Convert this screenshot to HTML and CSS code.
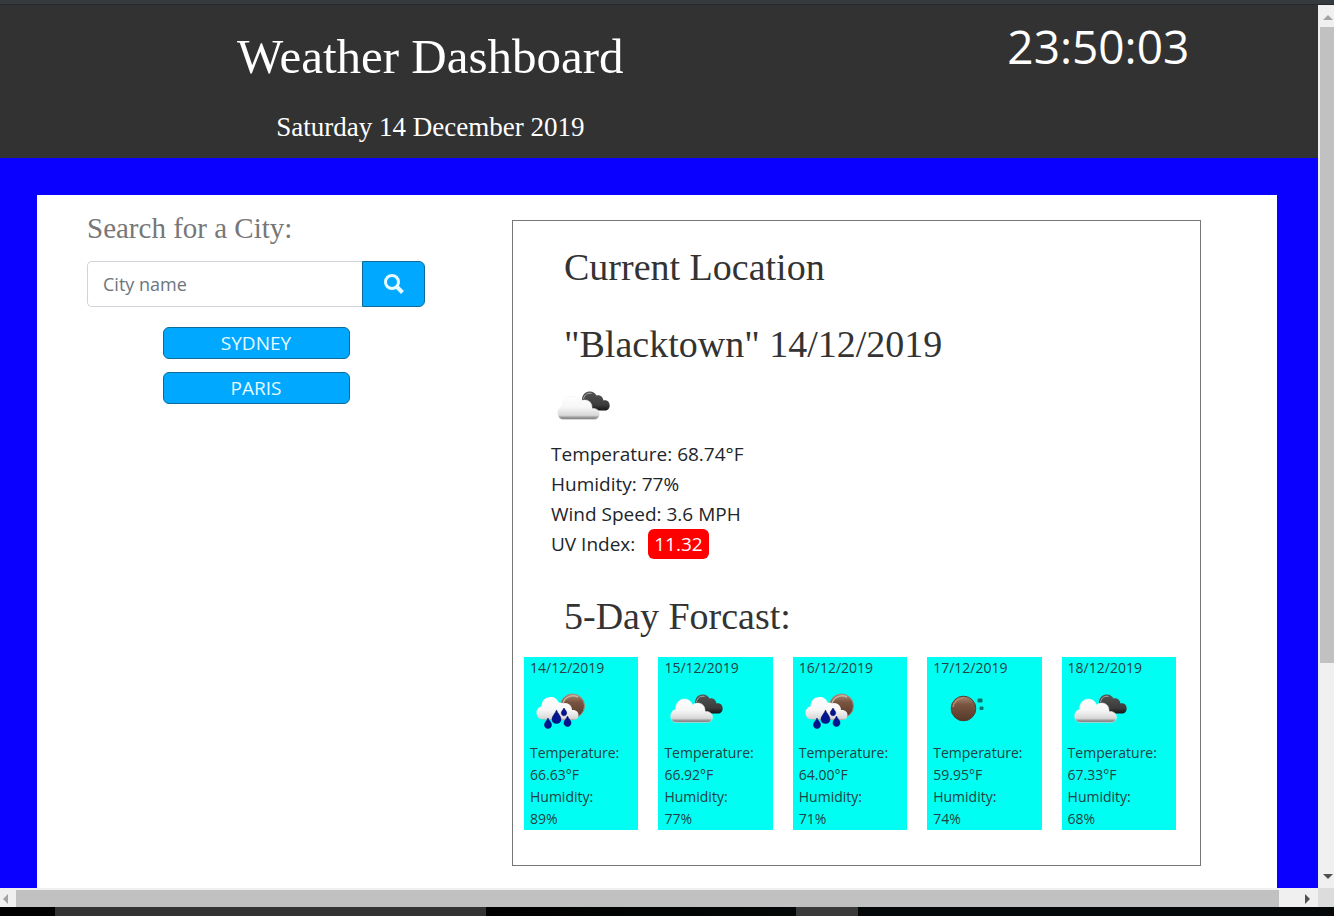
FILE: index.html
```html
<!DOCTYPE html>
<html lang="en">
<head>
<meta charset="utf-8">
<title>Weather Dashboard</title>
<link rel="stylesheet" href="styles.css">
</head>
<body>
<svg class="defs" aria-hidden="true">
  <defs>
    <linearGradient id="white-cloud" gradientUnits="userSpaceOnUse" x1="0" y1="18" x2="0" y2="44">
      <stop offset="0" stop-color="#fff"/><stop offset=".5" stop-color="#f7f7f7"/><stop offset=".82" stop-color="#d8d8d8"/><stop offset=".9" stop-color="#999"/><stop offset="1" stop-color="#777"/>
    </linearGradient>
    <linearGradient id="dark-cloud" gradientUnits="userSpaceOnUse" x1="0" y1="15" x2="0" y2="35">
      <stop offset="0" stop-color="#555"/><stop offset=".7" stop-color="#3c3c3c"/><stop offset="1" stop-color="#111"/>
    </linearGradient>
    <linearGradient id="sun" x1="0" y1="0" x2="0" y2="1">
      <stop offset="0" stop-color="#a98a74"/><stop offset=".35" stop-color="#795440"/><stop offset="1" stop-color="#55392a"/>
    </linearGradient>
    <symbol id="cloudy" viewBox="0 0 62 63">
      <path fill="url(#dark-cloud)" d="M31 24C31 18 35 15.500 39 15.500C42 15.500 44.500 17.500 45.500 19.500C49 18.500 52 21 52.500 24.500C56 23.500 58.700 26 58.700 29.500C58.700 32.500 56.500 34.500 54 34.500H40Z"/>
      <path fill="none" stroke="#aaa" d="M32.500 23C33.500 18.500 37 16.500 40.500 17.500"/>
      <path fill="url(#white-cloud)" stroke="#eee" stroke-width=".5" d="M12 43.500C8.500 43.500 6.700 40.500 6.700 37C6.700 33.500 8.500 31 11.500 30.500C11.500 24.500 15 20 20.500 20C24.500 20 27.500 22.500 28.500 26C30 24.500 32 24 34 24C38.500 24 41.500 28 41 32.500C45.500 32 48.500 34.500 48.500 38C48.500 41.500 46 43.500 43 43.500Z"/>
    </symbol>
    <symbol id="rain" viewBox="0 0 62 63">
      <circle cx="42.500" cy="27" r="12" fill="url(#sun)" stroke="#a48e7c"/>
      <path fill="none" stroke="#c9b5a6" stroke-width="1.500" d="M33 24C35 18 42 15 48 18"/>
      <path fill="url(#white-cloud)" d="M13 40.500C9 40.500 6.500 37.500 6.500 34C6.500 30.500 8.500 28 11.500 27.500C11.500 22 15 18 20.500 18C24.500 18 27.500 20 28.500 23.500C33 23 36.500 26.500 36.500 32L29 41Z"/>
      <path fill="url(#white-cloud)" d="M25 41C21 41 19 37 21 34C22 32 24 31 27 31C27.500 27 31 24 35 24C39 24 42 27 42 31C46 30.500 48.500 33 48.500 36C48.500 39 46.500 41 43 41Z"/>
      <g fill="#00158f" stroke="#000060" stroke-width=".5">
        <path d="M26.500 31C28 35 31 37 31 40.500C31 43 29 44.500 26.500 44.500S22 43 22 40.500C22 37 25 35 26.500 31Z"/>
        <path d="M18 39C19 42 21.500 43 21.500 46C21.500 48 20 49.500 18 49.500S14.500 48 14.500 46C14.500 43 17 42 18 39Z"/>
        <path d="M37.500 37C38.500 40 41 41 41 44C41 46 39.500 47.500 37.500 47.500S34 46 34 44C34 41 36.500 40 37.500 37Z"/>
        <path d="M34 29C35 31 36.700 32 36.700 34C36.700 35.500 35.500 36.700 34 36.700S31.300 35.500 31.300 34C31.300 32 33 31 34 29Z"/>
      </g>
    </symbol>
    <symbol id="clear" viewBox="0 0 62 63">
      <circle cx="30.500" cy="29.500" r="12.300" fill="url(#sun)" stroke="#563828"/>
      <path fill="none" stroke="#b58a71" stroke-width="1.500" d="M20 28C20.500 23 25 19 30 19"/>
      <g fill="#08746c"><rect x="44.500" y="19.500" width="5" height="4" rx="1"/><rect x="46.500" y="27.500" width="4" height="3.500" rx="1"/></g>
    </symbol>
  </defs>
</svg>

<div class="top-edge"></div>
<div class="viewport">
  <div class="page">
    <header class="header">
      <div class="heading">
        <h1 class="title">Weather Dashboard</h1>
        <p class="date">Saturday 14 December 2019</p>
      </div>
      <time class="clock">23:50:03</time>
    </header>
    <main class="main">
      <div class="panel">
        <section class="search">
          <label class="search-label" for="city">Search for a City:</label>
          <form class="search-form">
            <input class="search-input" id="city" type="text" placeholder="City name">
            <button class="search-button" type="button" aria-label="Search">
              <svg width="20" height="20" viewBox="0 0 20 20" aria-hidden="true"><circle cx="8" cy="8" r="6.500" fill="none" stroke="#e6faff" stroke-width="3"/><path d="M13 13l5.500 5.500" stroke="#e6faff" stroke-width="4"/></svg>
            </button>
          </form>
          <div class="history">
            <button class="city" type="button">SYDNEY</button>
            <button class="city" type="button">PARIS</button>
          </div>
        </section>
        <section class="weather">
          <h2 class="subtitle">Current Location</h2>
          <h2 class="subtitle">"Blacktown" 14/12/2019</h2>
          <div class="current">
            <svg class="icon"><use href="#cloudy"/></svg>
            <p>Temperature: 68.74°F</p>
            <p>Humidity: 77%</p>
            <p>Wind Speed: 3.6 MPH</p>
            <p class="uv">UV Index: <span class="badge">11.32</span></p>
          </div>
          <h2 class="subtitle">5-Day Forcast:</h2>
          <div class="forecast">
            <article class="day"><p>14/12/2019</p><svg class="icon"><use href="#rain"/></svg><p>Temperature: 66.63°F</p><p>Humidity:<br>89%</p></article>
            <article class="day"><p>15/12/2019</p><svg class="icon"><use href="#cloudy"/></svg><p>Temperature: 66.92°F</p><p>Humidity:<br>77%</p></article>
            <article class="day"><p>16/12/2019</p><svg class="icon"><use href="#rain"/></svg><p>Temperature: 64.00°F</p><p>Humidity:<br>71%</p></article>
            <article class="day"><p>17/12/2019</p><svg class="icon"><use href="#clear"/></svg><p>Temperature: 59.95°F</p><p>Humidity:<br>74%</p></article>
            <article class="day"><p>18/12/2019</p><svg class="icon"><use href="#cloudy"/></svg><p>Temperature: 67.33°F</p><p>Humidity:<br>68%</p></article>
          </div>
        </section>
      </div>
    </main>
  </div>
  <div class="vbar">
    <svg class="arrow-up" width="10" height="5" viewBox="0 0 10 5"><path fill="#a3a3a3" d="M0 5L5 0L10 5Z"/></svg>
    <div class="vthumb"></div>
    <div class="vtrack"></div>
    <svg class="arrow-down" width="10" height="5" viewBox="0 0 10 5"><path fill="#505050" d="M0 0L5 5L10 0Z"/></svg>
  </div>
  <div class="hbar">
    <svg class="arrow-left" width="5" height="10" viewBox="0 0 5 10"><path fill="#a3a3a3" d="M5 0L0 5L5 10Z"/></svg>
    <div class="hthumb"></div>
    <svg class="arrow-right" width="5" height="10" viewBox="0 0 5 10"><path fill="#505050" d="M0 0L5 5L0 10Z"/></svg>
  </div>
  <div class="corner"></div>
</div>
<div class="taskbar"></div>
</body>
</html>
```

FILE: styles.css
```css
* { box-sizing: border-box; }
body {
  display: flex;
  flex-direction: column;
  height: 100vh;
  margin: 0;
  overflow: hidden;
  background: #000;
  color: #212529;
  font-family: "Open Sans", "Noto Sans", sans-serif;
  font-size: 19px;
}
p, h1, h2 { margin: 0; font-weight: 400; }
button, input { font: inherit; }
.defs { position: absolute; width: 0; height: 0; }

.top-edge { flex: none; height: 5px; background: #343a3d; border-bottom: 1px solid #25292b; }
.taskbar {
  flex: none;
  height: 9px;
  background: linear-gradient(to right, #000 4.1%, #333 4.1%, #333 36.4%, #000 36.4%, #050808 59.7%, #3a3a3a 59.7%, #3a3a3a 64.3%, #050808 64.3%);
}

.viewport {
  display: grid;
  flex: 1;
  grid-template-columns: minmax(0, 1fr) 16px;
  grid-template-rows: minmax(0, 1fr) 19px;
  min-height: 0;
}
.page { display: flex; flex-direction: column; overflow: hidden; background: #0a00ff; }

.header {
  display: grid;
  flex: none;
  grid-template-columns: 2fr 1fr;
  padding: 16px 0 12px;
  background: #323232;
  color: #fff;
}
.heading { padding-right: 18px; text-align: center; font-family: "Liberation Serif", serif; }
.title { font-size: 49px; line-height: 72px; }
.date { padding-top: 16px; font-size: 27px; line-height: 37px; }
.clock { font-size: 46px; line-height: 50px; text-align: center; }

.main { flex: 1; padding: 37px 41px 0 37px; }
.panel {
  display: grid;
  grid-template-columns: 338fr 689fr;
  align-items: start;
  gap: 87px;
  min-height: 100%;
  padding: 18px 76px 25px 50px;
  background: #fff;
}

.search-label {
  display: block;
  margin-bottom: 18px;
  font-family: "Liberation Serif", serif;
  font-size: 29px;
  line-height: 30px;
  color: #777;
}
.search-form { display: flex; height: 46px; }
.search-input {
  flex: 1;
  min-width: 0;
  padding: 0 15px;
  border: 1px solid #ced4da;
  border-right: 0;
  border-radius: 5px 0 0 5px;
  background: #fff;
  font-size: 18px;
}
.search-input::placeholder { color: #6c757d; opacity: 1; }
.search-button {
  display: grid;
  place-items: center;
  width: 63px;
  padding: 0;
  border: 1px solid #0b6c9c;
  border-radius: 0 6px 6px 0;
  background: #00a8ff;
}
.history { display: grid; justify-content: center; gap: 13px; padding-top: 20px; }
.city {
  width: 187px;
  height: 32px;
  padding: 0;
  border: 1px solid #0b6c9c;
  border-radius: 6px;
  background: #00a8ff;
  color: #e6faff;
  line-height: 30px;
}

.weather { margin-top: 7px; padding: 0 24px 35px 11px; border: 1px solid #777; }
.subtitle {
  padding: 16px 0 1px 40px;
  font-family: "Liberation Serif", serif;
  font-size: 38px;
  line-height: 60px;
  color: #333;
}
.current { padding: 1px 0 11px 27px; line-height: 30px; }
.icon { display: block; width: 62px; height: 63px; }
.badge {
  display: inline-block;
  margin-left: 8px;
  padding: 0 6px;
  border-radius: 6px;
  background: #f00;
  color: #fff;
}
.forecast { display: grid; grid-template-columns: repeat(5, minmax(0, 1fr)); gap: 20px; padding-top: 10px; }
.day { padding: 0 6px; background: #00fff2; font-size: 14px; line-height: 22px; color: #234044; }

.vbar { display: flex; flex-direction: column; padding: 1px 0 0 2px; background: #f0f0f0; }
.arrow-up { margin: 9px 0 7px 3px; }
.vthumb { flex: 636; background: #c1c1c1; }
.vtrack { flex: 211; }
.arrow-down { margin: 0 0 9px 3px; }
.hbar { display: flex; align-items: center; padding-top: 2px; background: #f0f0f0; }
.arrow-left { margin: 0 8px 0 3px; }
.hthumb { flex: 1; align-self: stretch; background: #c1c1c1; }
.arrow-right { margin: 0 8px 0 26px; }
.corner { background: #dcdcdc; }
```
